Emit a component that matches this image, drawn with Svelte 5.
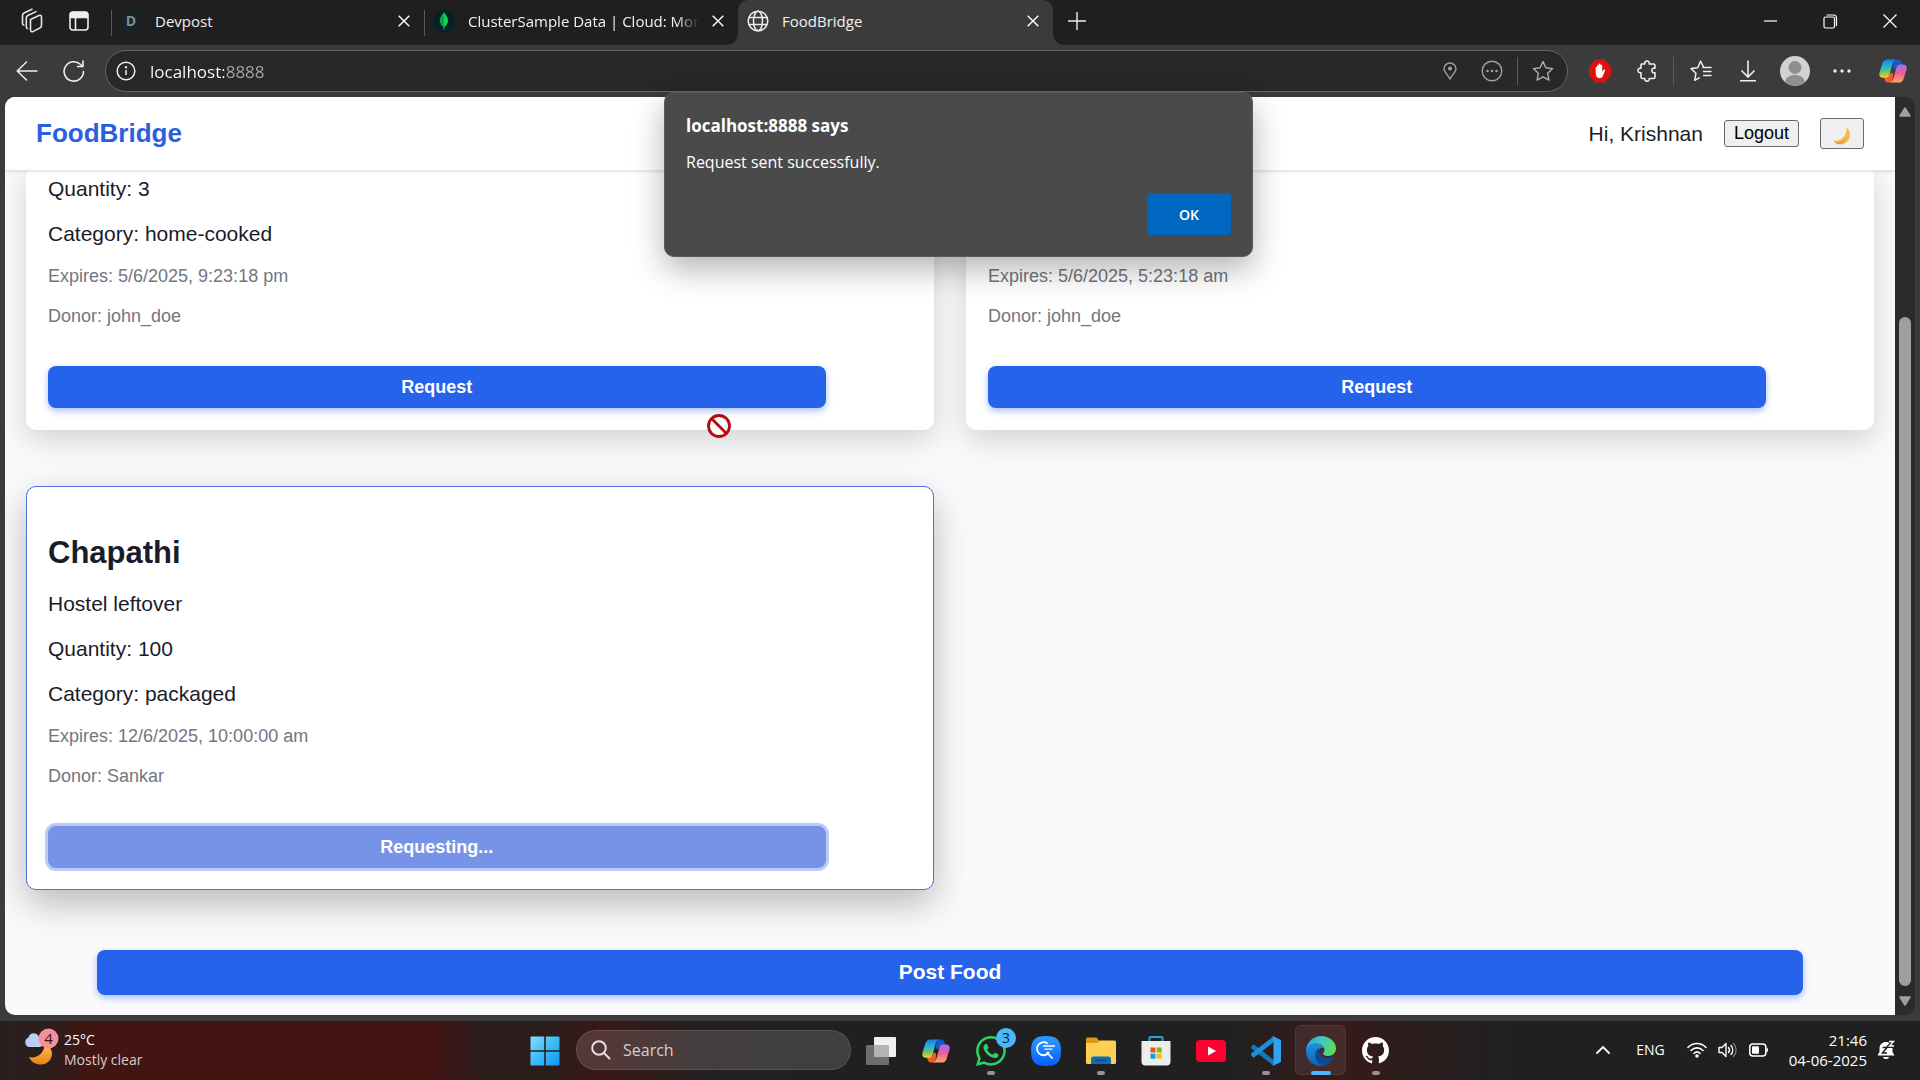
<script lang="ts">
  type Food = {
    title?: string;
    lines: string[];
    meta: string[];
    action: string;
    busy?: boolean;
    cut?: boolean;
  };

  const foods: Food[] = [
    {
      lines: ['Quantity: 3', 'Category: home-cooked'],
      meta: ['Expires: 5/6/2025, 9:23:18 pm', 'Donor: john_doe'],
      action: 'Request',
      cut: true,
    },
    {
      lines: [],
      meta: ['Expires: 5/6/2025, 5:23:18 am', 'Donor: john_doe'],
      action: 'Request',
      cut: true,
    },
    {
      title: 'Chapathi',
      lines: ['Hostel leftover', 'Quantity: 100', 'Category: packaged'],
      meta: ['Expires: 12/6/2025, 10:00:00 am', 'Donor: Sankar'],
      action: 'Requesting...',
      busy: true,
    },
  ];
</script>

{#snippet cross()}
  <svg width="12" height="12" viewBox="0 0 12 12" fill="none" stroke="#fff" stroke-width="1.4"><path d="M.7.7l10.6 10.6M11.3.7L.7 11.3" /></svg>
{/snippet}

{#snippet copilot()}
  <svg width="30" height="30" viewBox="0 0 24 24">
    <defs>
      <linearGradient id="cp-a" x1="0" y1="0" x2="0" y2="1">
        <stop offset="0" stop-color="#1b7de8" /><stop offset=".4" stop-color="#25b5d8" /><stop offset=".68" stop-color="#6cc66a" /><stop offset="1" stop-color="#f2d21c" />
      </linearGradient>
      <linearGradient id="cp-b" x1="0" y1="1" x2="0" y2="0">
        <stop offset="0" stop-color="#a56bee" /><stop offset=".5" stop-color="#ee5f9a" /><stop offset="1" stop-color="#ffa45c" />
      </linearGradient>
    </defs>
    <path fill="#1659c7" d="M12.500 2.800h3.600c1.500 0 2.300.9 2.700 2.400l.6 2c-3 .1-4.600.8-5.600 3.800l-2-1z" />
    <path fill="#f4582c" d="M11.500 21.200H7.900c-1.500 0-2.300-.9-2.700-2.400l-.6-2c3-.1 4.600-.8 5.600-3.800l2 1z" />
    <path fill="url(#cp-a)" d="M7.500 2.800H14.800C13 2.800 12.200 4.200 11.700 6L9.300 14.600C8.700 16.700 7.700 17.300 6 17.300H3.900C1.400 17.300.6 15.400 1.300 12.900L3.500 5.900C4.200 3.800 5.500 2.800 7.500 2.800z" />
    <path fill="url(#cp-b)" transform="rotate(180 12 12)" d="M7.500 2.800H14.800C13 2.800 12.200 4.200 11.700 6L9.300 14.600C8.700 16.700 7.700 17.300 6 17.300H3.900C1.400 17.300.6 15.400 1.300 12.900L3.500 5.900C4.200 3.800 5.500 2.800 7.500 2.800z" />
  </svg>
{/snippet}

<div class="desktop">
  <header class="tabs">
    <button class="slot" aria-label="Workspaces">
      <svg width="24" height="26" viewBox="0 0 24 26" fill="none" stroke="#e4e4e4" stroke-width="1.6" stroke-linejoin="round" stroke-linecap="round">
        <path d="M10.500 11.500l8.500-4c1.500-.6 2.500 0 2.500 1.500v8.500c0 1.200-.6 2-1.600 2.500l-6.700 3.400c-1.600.7-2.700.1-2.700-1.400z" />
        <path d="M7.500 20.500c-.9-.2-1.200-.8-1.200-1.700V10c0-1.200.5-2 1.500-2.500l8.200-3.900M3.800 17c-.9-.2-1.300-.8-1.300-1.700V7.500c0-1.200.5-2 1.500-2.500L12 1.300" />
      </svg>
    </button>
    <button class="slot" aria-label="Tab actions">
      <svg width="20" height="20" viewBox="0 0 20 20" fill="none" stroke="#eee" stroke-width="1.6"><rect x="1" y="1" width="18" height="18" rx="3" /><path d="M1.500 4.500V3.500a2 2 0 0 1 2-2h13a2 2 0 0 1 2 2v3h-17z" fill="#eee" /><path d="M6.500 6v13" /></svg>
    </button>
    <div class="tab first">
      <span class="fav dev">D</span>
      <a class="name" href="#devpost">Devpost</a>
      <button class="bare" aria-label="Close Devpost">{@render cross()}</button>
    </div>
    <div class="tab second">
      <span class="fav mongo"><svg width="10" height="18" viewBox="0 0 10 18"><path fill="#13d45e" d="M5 0c.5 2 4 4.500 4 8.500 0 3-1.800 5-3.500 6.300L5.300 18h-.6l-.2-3.200C2.800 13.500 1 11.500 1 8.500 1 4.500 4.500 2 5 0z" /><path fill="#09a348" d="M5 0v15l-.5-.2C2.800 13.500 1 11.500 1 8.500 1 4.500 4.500 2 5 0z" /></svg></span>
      <a class="name fade" href="#cluster">ClusterSample Data | Cloud: Mong</a>
      <button class="bare" aria-label="Close ClusterSample Data">{@render cross()}</button>
    </div>
    <div class="tab active">
      <span class="fav"><svg width="22" height="22" viewBox="0 0 22 22" fill="none" stroke="#eee" stroke-width="1.500"><circle cx="11" cy="11" r="9.800" /><ellipse cx="11" cy="11" rx="4.500" ry="9.800" /><path d="M2 7.500h18M2 14.500h18" /></svg></span>
      <a class="name" href="#foodbridge">FoodBridge</a>
      <button class="bare" aria-label="Close FoodBridge">{@render cross()}</button>
    </div>
    <button class="slot" aria-label="New tab"><svg width="18" height="18" viewBox="0 0 18 18" stroke="#eee" stroke-width="1.400"><path d="M9 0v18M0 9h18" /></svg></button>
    <div class="window">
      <button aria-label="Minimize"><svg width="13" height="13" viewBox="0 0 13 13" stroke="#fff" stroke-width="1.200"><path d="M0 6h13" /></svg></button>
      <button aria-label="Restore"><svg width="15" height="15" viewBox="0 0 15 15" fill="none" stroke="#fff" stroke-width="1.200"><rect x="1" y="3" width="10.500" height="11" rx="1.500" /><path d="M3.500 1h7a3 3 0 0 1 3 3v8" /></svg></button>
      <button aria-label="Close window"><svg width="14" height="14" viewBox="0 0 14 14" stroke="#fff" stroke-width="1.200"><path d="M.5.5l13 13M13.500.5l-13 13" /></svg></button>
    </div>
  </header>

  <nav class="toolbar" aria-label="Browser toolbar">
    <button class="slot" aria-label="Back"><svg width="22" height="20" viewBox="0 0 22 20" fill="none" stroke="#eee" stroke-width="1.500" stroke-linecap="round" stroke-linejoin="round"><path d="M21 10H1.200M10.500 1L1.200 10l9.300 9" /></svg></button>
    <button class="slot" aria-label="Reload"><svg width="22" height="22" viewBox="0 0 22 22" fill="none" stroke="#eee" stroke-width="1.600" stroke-linecap="round" stroke-linejoin="round"><path d="M20.500 11.500a9.700 9.700 0 1 1-2.900-7L20 6.500M20 1v5.500h-5.500" /></svg></button>
    <div class="address">
      <button class="bare" aria-label="Site information"><svg width="20" height="20" viewBox="0 0 20 20" fill="none" stroke="#eee" stroke-width="1.500"><circle cx="10" cy="10" r="8.800" /><path d="M10 9v5" /><circle cx="10" cy="6.300" r=".5" fill="#eee" /></svg></button>
      <input class="url" aria-label="Address" value="localhost:8888" />
      <button class="bare pin" aria-label="Location"><svg width="14" height="18" viewBox="0 0 14 18" fill="none" stroke="#a0a0a0" stroke-width="1.400"><path d="M7 17C5 13 1 10 1 6.800a6 5.800 0 0 1 12 0C13 10 9 13 7 17z" /><circle cx="7" cy="6.500" r="2" fill="#a0a0a0" stroke="none" /></svg></button>
      <button class="bare" aria-label="Site options"><svg width="22" height="22" viewBox="0 0 22 22" fill="none" stroke="#a0a0a0" stroke-width="1.400"><circle cx="11" cy="11" r="9.800" /><g fill="#a0a0a0" stroke="none"><circle cx="6.500" cy="11" r="1.300" /><circle cx="11" cy="11" r="1.300" /><circle cx="15.500" cy="11" r="1.300" /></g></svg></button>
      <i class="rule"></i>
      <button class="bare" aria-label="Favorite"><svg width="22" height="22" viewBox="0 0 22 22" fill="none" stroke="#b0b0b0" stroke-width="1.400" stroke-linejoin="round"><path d="M11 1.500l2.900 6.200 6.700.9-4.900 4.700 1.200 6.800-5.900-3.300-5.900 3.300 1.200-6.800L1.400 8.600l6.700-.9z" /></svg></button>
    </div>
    <div class="tools">
      <button class="slot" aria-label="Ad blocker"><svg width="22" height="24" viewBox="0 0 24 26"><path d="M7.500 1.500h9L23 8.500v9l-6.500 7h-9L1 17.500v-9z" fill="#dc1212" stroke="#dc1212" stroke-width="2" stroke-linejoin="round" /><path fill="#fff" d="M7.300 15V9.300c0-1.100 1.600-1.100 1.600 0V7.100c0-1.200 1.800-1.200 1.800 0V5.800c0-1.200 1.900-1.200 1.900 0v1.300c0-1.100 1.800-1.100 1.800 0v6.600l1.700-2c.8-.8 1.900-.2 1.500.8l-2.300 5.300c-.7 1.800-1.700 3-3.800 3-2.700 0-4.200-1.900-4.200-5.800z" /></svg></button>
      <button class="slot" aria-label="Extensions"><svg width="20" height="22" viewBox="0 0 20 22" fill="none" stroke="#eee" stroke-width="1.600" stroke-linejoin="round"><path d="M4.500 4h3.300c-1-4 5.400-4 4.400 0h4.300c1 0 1.500.5 1.500 1.500v2.700c-4.200-.8-4.200 5.400 0 4.600v4.200c0 1-.5 1.500-1.500 1.500h-4.300c.8 3.500-5.200 3.500-4.400 0H5.500c-1 0-1.500-.5-1.500-1.500v-4.200c-4 .6-4-5.200 0-4.600V4.500z" /></svg></button>
      <i class="rule"></i>
      <button class="slot" aria-label="Favorites list"><svg width="22" height="22" viewBox="0 0 22 22" fill="none" stroke="#eee" stroke-width="1.500" stroke-linejoin="round" stroke-linecap="round"><path d="M13.500 7L10.500 1.200 7.700 7.700l-6.500.9 4.700 4.700-1.200 7 4.500-2.500M13 7.500h8M13.500 11.500H21M13.500 15.500H21" /></svg></button>
      <button class="slot" aria-label="Downloads"><svg width="18" height="22" viewBox="0 0 18 22" fill="none" stroke="#eee" stroke-width="1.600"><path d="M9 .5v16M2.500 10.500L9 17l6.500-6.500M1 20.800h16" /></svg></button>
      <button class="slot" aria-label="Profile"><svg width="30" height="30" viewBox="0 0 30 30"><circle cx="15" cy="15" r="15" fill="#d2d2d2" /><circle cx="15" cy="11.500" r="6.500" fill="#8f8f8f" /><path fill="#8f8f8f" d="M5 26c1-5 5-7 10-7s9 2 10 7c-5.500 5.300-14.500 5.300-20 0z" /></svg></button>
      <button class="slot" aria-label="Settings and more"><svg width="18" height="6" viewBox="0 0 18 6" fill="#eee"><circle cx="2" cy="3" r="1.700" /><circle cx="9" cy="3" r="1.700" /><circle cx="16" cy="3" r="1.700" /></svg></button>
      <button class="slot assistant" aria-label="Copilot">{@render copilot()}</button>
    </div>
  </nav>

  <div class="frame">
    <div class="page">
      <header class="site">
        <h1>FoodBridge</h1>
        <span class="hello">Hi, Krishnan</span>
        <button class="plain">Logout</button>
        <button class="plain theme" aria-label="Toggle dark mode">
          <svg width="20" height="20" viewBox="0 0 20 20"><path fill="#f9b851" d="M14.300 1.200c3 2.400 4.300 6.300 3.200 10.200-1.400 5-6.200 7.700-10.600 6.900-2.600-.5-4.500-2-5.700-4.300 3 1.300 6.700.8 9.200-1.700 3.200-2.900 4.500-7 3.900-11.100z" /><path fill="#e79a38" d="M2.500 15.500c4.500 1.500 9-.2 11.500-3.500-1 4-4.500 6.500-7.700 6.100-1.600-.4-2.900-1.300-3.800-2.600z" /></svg>
        </button>
      </header>
      <main>
        <div class="grid">
          {#each foods as food}
            <article class="card" class:cut={food.cut} class:busy={food.busy}>
              {#if food.title}<h2>{food.title}</h2>{/if}
              {#each food.lines as line}<p>{line}</p>{/each}
              {#each food.meta as line}<p class="meta">{line}</p>{/each}
              <button class="request" disabled={food.busy}>{food.action}</button>
            </article>
          {/each}
        </div>
        <button class="post">Post Food</button>
      </main>
    </div>
    <div class="scroll" aria-hidden="true">
      <svg width="12" height="10" viewBox="0 0 12 10"><path fill="#a0a0a0" stroke="#a0a0a0" stroke-width="1.500" stroke-linejoin="round" d="M6 1l5 8H1z" /></svg>
      <i class="above"></i>
      <i class="thumb"></i>
      <svg width="12" height="10" viewBox="0 0 12 10"><path fill="#a0a0a0" stroke="#a0a0a0" stroke-width="1.500" stroke-linejoin="round" d="M6 9l5-8H1z" /></svg>
    </div>
  </div>

  <footer class="taskbar">
    <button class="weather" aria-label="Weather">
      <svg width="36" height="44" viewBox="0 0 36 44">
        <defs><linearGradient id="mo" x1="0" y1="0" x2="0" y2="1"><stop offset="0" stop-color="#fbc14b" /><stop offset="1" stop-color="#e98116" /></linearGradient></defs>
        <path fill="url(#mo)" d="M21 16c7 3 9 10 5 16-5 7-17 6-21-3 7 2 15-3 16-13z" />
        <path fill="#b9cdf5" d="M5 19a5 5 0 0 1-.5-9.500C5.500 4 13 4 14.500 8.500 18 8 20 11 19.500 14s-2 5-4.500 5z" />
        <circle cx="24.500" cy="10.500" r="10" fill="#f78f98" />
        <text x="24.500" y="16" text-anchor="middle" font-size="15" fill="#3a1414">4</text>
      </svg>
      <span><b>25°C</b><em>Mostly clear</em></span>
    </button>

    <div class="apps">
      <button class="app" aria-label="Start"><svg width="30" height="30" viewBox="0 0 30 30"><defs><linearGradient id="win" x1="0" y1="0" x2="1" y2="1"><stop offset="0" stop-color="#86dcff" /><stop offset=".5" stop-color="#3cbcf8" /><stop offset="1" stop-color="#0f98f5" /></linearGradient></defs><path fill="url(#win)" d="M1.500.5h12.700v13.700H.5V1.500a1 1 0 0 1 1-1zM15.800.5h12.700a1 1 0 0 1 1 1v12.700H15.800zM.5 15.800h13.700v13.700H1.500a1 1 0 0 1-1-1zM15.800 15.800h13.700v12.700a1 1 0 0 1-1 1H15.800z" /></svg></button>
      <label class="search">
        <svg width="20" height="20" viewBox="0 0 20 20" fill="none" stroke="#e8e0e0" stroke-width="2" stroke-linecap="round"><circle cx="8" cy="8" r="6.800" /><path d="M13 13l5.500 5.500" /></svg>
        <input aria-label="Search" placeholder="Search" />
      </label>
      <button class="app" aria-label="Task view"><svg width="30" height="30" viewBox="0 0 30 30"><rect x="8" y="1" width="22" height="20" rx="1" fill="#f0f0f0" /><rect x="0" y="9" width="23" height="20" rx="1" fill="#6d6d6d" /><rect x="8" y="9" width="15" height="12" fill="#b4b4b4" /></svg></button>
      <button class="app" aria-label="Copilot app">{@render copilot()}</button>
      <button class="app open" aria-label="WhatsApp">
        <svg width="30" height="30" viewBox="0 0 16 16" fill="#2bd366"><path d="M13.601 2.326A7.850 7.850 0 0 0 7.994 0C3.627 0 .068 3.558.064 7.926c0 1.399.366 2.760 1.057 3.965L0 16l4.204-1.102a7.900 7.900 0 0 0 3.790.965h.004c4.368 0 7.926-3.558 7.930-7.930A7.900 7.900 0 0 0 13.600 2.326zM7.994 14.521a6.600 6.600 0 0 1-3.356-.92l-.24-.144-2.494.654.666-2.433-.156-.251a6.560 6.560 0 0 1-1.007-3.505c0-3.626 2.957-6.584 6.591-6.584a6.560 6.560 0 0 1 4.660 1.931 6.560 6.560 0 0 1 1.928 4.660c-.004 3.639-2.961 6.592-6.592 6.592m3.615-4.934c-.197-.099-1.170-.578-1.353-.646-.182-.065-.315-.099-.445.099-.133.197-.513.646-.627.775-.114.133-.232.148-.43.05-.197-.1-.836-.308-1.592-.985-.59-.525-.985-1.175-1.103-1.372-.114-.198-.011-.304.088-.403.087-.088.197-.232.296-.346.1-.114.133-.198.198-.33.065-.134.034-.248-.015-.347-.05-.099-.445-1.076-.612-1.470-.16-.389-.323-.335-.445-.34-.114-.007-.247-.007-.38-.007a.73.73 0 0 0-.529.247c-.182.198-.691.677-.691 1.654s.71 1.916.81 2.049c.098.133 1.394 2.132 3.383 2.992.47.205.84.326 1.129.418.475.152.904.129 1.246.08.38-.058 1.171-.48 1.338-.943.164-.464.164-.86.114-.943-.049-.084-.182-.133-.38-.232" /></svg>
        <span class="badge">3</span>
      </button>
      <button class="app" aria-label="Quick search"><svg width="30" height="30" viewBox="0 0 30 30"><defs><linearGradient id="qs" x1="0" y1="0" x2="0" y2="1"><stop offset="0" stop-color="#2f9cff" /><stop offset="1" stop-color="#0a5cff" /></linearGradient></defs><path fill="url(#qs)" d="M15 0c11 0 15 4 15 15s-4 15-15 15S0 26 0 15 4 0 15 0z" /><g fill="none" stroke="#fff" stroke-width="1.800" stroke-linecap="round"><path d="M16 7.200A6.500 6.500 0 1 0 17 17.500M16.500 17l4.500 5" /><path d="M12.500 10h11M14 13.200h7M16 16.300h2" stroke-width="1.300" /></g></svg></button>
      <button class="app open" aria-label="File Explorer"><svg width="30" height="28" viewBox="0 0 30 28"><path fill="#d79a10" d="M0 2a1.500 1.500 0 0 1 1.500-1.500h9L13.500 4H28v6H0z" /><path fill="#fcd053" d="M0 6h11l3-2.500h14.500A1.500 1.500 0 0 1 30 5v20.500a1.500 1.500 0 0 1-1.500 1.500h-27A1.500 1.500 0 0 1 0 25.500z" /><path fill="#0f6cb6" d="M5 27v-5a2.500 2.500 0 0 1 2.500-2.500h15A2.500 2.500 0 0 1 25 22v5z" /><path stroke="#0a4a86" stroke-width="1.500" d="M9 23.500h12" /></svg></button>
      <button class="app" aria-label="Microsoft Store"><svg width="30" height="30" viewBox="0 0 30 30"><path fill="none" stroke="#27a5e0" stroke-width="2" d="M8.500 7V2a1 1 0 0 1 1-1h11a1 1 0 0 1 1 1v5" /><path fill="#ececec" d="M.5 5h29v20.500a4 4 0 0 1-4 4h-21a4 4 0 0 1-4-4z" /><path fill="#f25022" d="M9.500 11.500h5v5h-5z" /><path fill="#7fba00" d="M15.700 11.500h5v5h-5z" /><path fill="#00a4ef" d="M9.500 17.700h5v5h-5z" /><path fill="#ffb900" d="M15.700 17.700h5v5h-5z" /></svg></button>
      <button class="app" aria-label="YouTube"><svg width="30" height="22" viewBox="0 0 30 22"><rect width="30" height="22" rx="4" fill="#ff0033" /><path fill="#fff" d="M12 6.500l8 4.500-8 4.500z" /></svg></button>
      <button class="app open" aria-label="Visual Studio Code"><svg width="30" height="30" viewBox="0 0 30 30"><path fill="#1278bd" d="M0 11l2-2.200c.4-.4.900-.4 1.400 0L23 24v6L.2 12.600C-.2 12.100-.3 11.500 0 11z" /><path fill="#1b8fd8" d="M0 19l2 2.200c.4.4.9.400 1.400 0L23 6V0L.2 17.400c-.4.500-.5 1.100-.2 1.600z" /><path fill="#30a3ee" d="M22 .2l7 3.300c.7.300 1 .8 1 1.500v20c0 .7-.3 1.200-1 1.500l-7 3.300c-.8.300-1.400.1-2-.5 1 .9 2.500.2 2.500-1.200V1.900c0-1.400-1.500-2.100-2.500-1.200.6-.6 1.200-.8 2-.5z" /></svg></button>
      <button class="app open current" aria-label="Microsoft Edge">
        <svg width="30" height="30" viewBox="0 0 30 30">
          <defs>
            <linearGradient id="ed-a" x1="0" y1=".4" x2="1" y2=".5"><stop offset="0" stop-color="#2aa6dc" /><stop offset=".5" stop-color="#3cc8bd" /><stop offset="1" stop-color="#62de4e" /></linearGradient>
            <linearGradient id="ed-b" x1="0" y1="0" x2="0" y2="1"><stop offset="0" stop-color="#1c91e0" /><stop offset="1" stop-color="#1160b8" /></linearGradient>
          </defs>
          <path fill="url(#ed-b)" d="M0 15C0 10 4 7.500 9.500 7.500c5 0 9 3 9 6.500 0-1.500-2-2.500-3.500-2-1.500.6-2.500 2.300-2.500 4.500 0 5 6 8.500 14.500 4.500-2.500 6-7 9-12.500 9C6.500 30 0 23.500 0 15z" />
          <path fill="#0d4a96" d="M13 12C8 14.500 8 22.500 12 26.500c2 2 5 3.300 8 2.700 3.500-1.500 6-4 7.500-7.200.3-.9-.4-1.100-1-.7-6.500 3-14-.3-13.500-9.300z" />
          <path fill="url(#ed-a)" d="M0 14.500C.5 6.500 7 0 15 0c8.500 0 15 6 15 12.500 0 4.500-3.500 7.500-8 7.500-3 0-5-1-5-2.200s1.500-1.800 1.500-4c0-3.500-4-6.300-9-6.300S.5 10.500 0 14.500z" />
        </svg>
      </button>
      <button class="app open" aria-label="GitHub Desktop"><svg width="27" height="27" viewBox="0 0 16 16" fill="#fff"><path d="M8 0C3.580 0 0 3.580 0 8c0 3.540 2.290 6.530 5.470 7.590.4.07.55-.17.55-.38 0-.19-.01-.82-.01-1.490-2.010.37-2.530-.49-2.690-.94-.09-.23-.48-.94-.82-1.130-.28-.15-.68-.52-.01-.53.63-.01 1.080.58 1.230.82.72 1.210 1.870.87 2.330.66.07-.52.28-.87.51-1.070-1.780-.2-3.640-.89-3.640-3.950 0-.87.31-1.590.82-2.150-.08-.2-.36-1.020.08-2.120 0 0 .67-.21 2.200.82.64-.18 1.320-.27 2-.27s1.360.09 2 .27c1.530-1.040 2.200-.82 2.200-.82.44 1.100.16 1.920.08 2.120.51.56.82 1.270.82 2.150 0 3.070-1.870 3.750-3.650 3.950.29.25.54.73.54 1.480 0 1.070-.01 1.930-.01 2.200 0 .21.15.46.55.38A8.010 8.010 0 0 0 16 8c0-4.420-3.580-8-8-8z" /></svg></button>
    </div>

    <div class="tray">
      <button class="bare" aria-label="Hidden icons"><svg width="14" height="9" viewBox="0 0 14 9" fill="none" stroke="#fff" stroke-width="1.800" stroke-linecap="round"><path d="M1 8l6-6 6 6" /></svg></button>
      <button class="bare lang">ENG</button>
      <button class="bare status" aria-label="Network, volume and battery">
        <svg width="20" height="16" viewBox="0 0 20 16" fill="none" stroke="#fff" stroke-width="1.600" stroke-linecap="round"><path d="M1 5.500c5-5.300 13-5.300 18 0M4 8.500c3.500-3.500 8.500-3.500 12 0M7 11.300c1.800-1.700 4.200-1.700 6 0" /><circle cx="10" cy="14" r="1" fill="#fff" /></svg>
        <svg width="20" height="16" viewBox="0 0 20 16" fill="none" stroke="#fff" stroke-width="1.400" stroke-linecap="round" stroke-linejoin="round"><path d="M1 5.500h3L8 1.500v13l-4-4H1zM10.500 5.500c1.300 1.500 1.300 3.500 0 5M13 3.500c2.300 2.600 2.300 6.400 0 9" /><path d="M15.500 1.500c3.500 3.700 3.500 9.300 0 13" stroke="#777" /></svg>
        <svg width="20" height="14" viewBox="0 0 20 14"><rect x=".8" y="1" width="16" height="12" rx="3" fill="none" stroke="#fff" stroke-width="1.500" /><rect x="3" y="3.200" width="7" height="7.600" rx="1" fill="#fff" /><path fill="#fff" d="M17.500 4.500c2 .3 2 4.700 0 5z" /></svg>
      </button>
      <button class="bare clock"><span>21:46</span><span>04-06-2025</span></button>
      <button class="bare" aria-label="Notifications"><svg width="18" height="20" viewBox="0 0 18 20"><path fill="#fff" d="M2.500 8.500C2.500 4.500 5.500 2 9 2s6.500 2.500 6.500 6.500V12l2 3.500H.5l2-3.500zM6 17h6c-.5 2.700-5.500 2.700-6 0z" /><path fill="none" stroke="#1f1f1f" stroke-width="1.500" d="M5.500 7.500h4.500L5.500 13H10" /><path fill="none" stroke="#1f1f1f" stroke-width="4" d="M12 1.500h4.500L12.500 6H17" /><path fill="none" stroke="#fff" stroke-width="1.400" d="M12 1.500h4.500L12.500 6H17" /></svg></button>
    </div>
  </footer>

  <div class="alert" role="alertdialog" aria-labelledby="alert-title" aria-describedby="alert-text">
    <h2 id="alert-title">localhost:8888 says</h2>
    <p id="alert-text">Request sent successfully.</p>
    <button>OK</button>
  </div>

  <svg class="cursor" width="24" height="24" viewBox="0 0 24 24" fill="none" stroke="#b80a0f" stroke-width="2.800" aria-hidden="true"><circle cx="12" cy="12" r="10.500" fill="#fff" /><path d="M4.800 4.800l14.400 14.400" /></svg>
</div>

<style>
  :global(body) { margin: 0; background: #202020; }
  .desktop {
    position: relative;
    display: flex;
    flex-direction: column;
    height: 100vh;
    overflow: hidden;
    background: #3b3b3b;
    color: #fff;
    font-family: "Open Sans", "Noto Sans", sans-serif;
    font-size: 15px;
  }
  button, input { font: inherit; color: inherit; }
  svg { display: block; flex: none; }
  .slot, .bare, .app, .window button, .weather {
    display: flex;
    align-items: center;
    justify-content: center;
    padding: 0;
    border: 0;
    background: none;
  }
  .slot { width: 47px; flex: none; }
  .rule { width: 1px; height: 28px; background: #5c5c5c; }

  .tabs { display: flex; align-items: stretch; flex: none; height: 45px; padding-left: 8px; background: #1f1f1f; }
  .tabs > .slot, .window { padding-bottom: 3px; }
  .tab { display: flex; align-items: center; gap: 13px; box-sizing: border-box; padding: 0 14px 4px 9px; flex: none; }
  .tab .name { flex: 1; overflow: hidden; white-space: nowrap; color: #f2f2f2; text-decoration: none; }
  .fav { display: flex; align-items: center; justify-content: center; width: 22px; height: 22px; border-radius: 50%; flex: none; }
  .dev { background: #152429; color: #7d8d94; font-size: 14px; font-weight: 700; }
  .mongo { background: #04202b; }
  .first, .second { background: linear-gradient(#5a5a5a, #5a5a5a) no-repeat 0 10px / 1px 26px; }
  .first { width: 313px; margin-left: 9px; }
  .second { width: 314px; }
  .fade { mask-image: linear-gradient(90deg, #000 90%, transparent); }
  .active { position: relative; width: 315px; background: #3b3b3b; border-radius: 10px 10px 0 0; }
  .active::before, .active::after { content: ""; position: absolute; bottom: 0; width: 10px; height: 10px; }
  .active::before { right: 100%; background: radial-gradient(circle at 0 0, transparent 9px, #3b3b3b 10px); }
  .active::after { left: 100%; background: radial-gradient(circle at 100% 0, transparent 9px, #3b3b3b 10px); }
  .window { display: flex; margin-left: auto; }
  .window button { width: 60px; }

  .toolbar { display: flex; align-items: center; flex: none; height: 52px; padding-left: 3px; background: #3b3b3b; }
  .address {
    display: flex;
    align-items: center;
    flex: 1;
    gap: 14px;
    box-sizing: border-box;
    height: 42px;
    margin-left: 8px;
    padding: 0 13px 0 10px;
    border: 1px solid #656565;
    border-radius: 21px;
    background: #282828;
  }
  .url {
    flex: 1;
    min-width: 0;
    padding: 0;
    border: 0;
    outline: 0;
    font-size: 17px;
    color: transparent;
    background: linear-gradient(90deg, #fff 74px, #a8a8a8 74px);
    background-clip: text;
    -webkit-background-clip: text;
  }
  .pin { margin-right: 10px; }
  .tools { display: flex; align-items: center; padding: 0 4px 0 8px; }
  .tools .rule { margin: 0 3px; }
  .assistant { margin-left: 4px; }

  .frame { display: flex; flex: 1; min-height: 0; padding: 0 5px 6px; }
  .page {
    display: flex;
    flex-direction: column;
    flex: 1;
    overflow: hidden;
    border-radius: 10px 0 0 10px;
    background: #fafafc;
    color: #1a1c29;
    font-family: "Liberation Sans", Arial, sans-serif;
    font-size: 21px;
  }
  .site {
    z-index: 1;
    display: flex;
    align-items: center;
    gap: 21px;
    flex: none;
    height: 73px;
    padding: 0 31px;
    background: #fff;
    box-shadow: 0 1px 4px rgba(0, 0, 0, 0.16);
  }
  h1 { flex: 1; margin: 0; color: #2a60e0; font-size: 26px; }
  .plain { height: 27px; padding: 0 9px; border: 1px solid #6b6b6b; border-radius: 3px; background: #efefef; color: #000; font-size: 18px; line-height: 25px; }
  .theme { display: flex; align-items: center; justify-content: center; width: 44px; height: 31px; padding: 4px 0 0; }

  main { display: flex; flex-direction: column; justify-content: flex-end; flex: 1; min-height: 0; padding: 0 21px 20px; }
  .grid { display: grid; grid-template-columns: 1fr 1fr; gap: 56px 32px; flex: none; }
  .card {
    display: flex;
    flex-direction: column;
    justify-content: flex-end;
    padding: 48px 21px 21px;
    border: 1px solid transparent;
    border-radius: 10px;
    background: #fff;
    box-shadow: 0 10px 30px rgba(0, 0, 0, 0.16);
  }
  .cut { padding-top: 0; border-top: 0; }
  .busy { border-color: #4a74d8; box-shadow: 0 14px 36px rgba(0, 0, 0, 0.26); }
  .card h2 { margin: 0 0 10px; font-size: 31px; line-height: 36px; }
  .card p { margin: 0; line-height: 45px; }
  .card .meta { color: #73757f; font-size: 18px; line-height: 40px; }
  .request, .post {
    padding: 0;
    border: 0;
    border-radius: 8px;
    background: #2563eb;
    box-shadow: 0 3px 7px rgba(37, 99, 235, 0.4);
    color: #fff;
    font-weight: 700;
  }
  .request { width: 90%; height: 42px; margin-top: 30px; font-size: 18px; }
  .request:disabled { background: #7693e8; box-shadow: 0 0 0 3px #bccbf5; }
  .post { flex: none; height: 45px; margin: 60px 71px 0; padding-bottom: 2px; }

  .scroll {
    display: flex;
    flex-direction: column;
    align-items: center;
    box-sizing: border-box;
    width: 20px;
    padding: 10px 0 9px;
    border-radius: 0 10px 10px 0;
    background: #2b2b2b;
  }
  .above { flex: 23; }
  .thumb { flex: 77; width: 12px; margin-bottom: 10px; border-radius: 6px; background: #9f9f9f; }

  .taskbar {
    display: grid;
    grid-template-columns: 1fr auto 1fr;
    align-items: center;
    flex: none;
    height: 59px;
    background: linear-gradient(90deg, #2a1f1f 0, #2c1e1d 50px, #421513 90px, #421513 430px, #2b1d1c 480px, #2c1d1c 550px, #3a1817 600px, #251f1f 700px, #202020 820px, #202020 1230px, #381a1a 1330px, #2a1d1d 1420px, #202020 1520px);
  }
  .weather { justify-self: start; gap: 4px; padding: 0 0 2px 24px; font-size: 14px; text-align: left; }
  .weather b, .weather em { display: block; font-style: normal; font-weight: 400; line-height: 20px; }
  .weather em { color: #d9cccc; }
  .apps { display: flex; align-items: center; }
  .app { position: relative; width: 55px; height: 59px; }
  .open::after { content: ""; position: absolute; bottom: 5px; width: 8px; height: 4px; border-radius: 2px; background: #9a9292; }
  .current::after { width: 20px; background: #4cb8fb; }
  .current::before { content: ""; position: absolute; inset: 4px 2px 5px; border: 1px solid #ffffff12; border-radius: 6px; background: #ffffff12; }
  .current svg { z-index: 1; }
  .badge { position: absolute; top: 7px; right: 2px; width: 20px; height: 20px; border-radius: 50%; background: #4cb8fb; color: #0d2233; font-size: 14px; line-height: 20px; }
  .search {
    display: flex;
    align-items: center;
    gap: 12px;
    box-sizing: border-box;
    width: 275px;
    height: 40px;
    margin: 0 2px 1px 4px;
    padding: 0 14px;
    border: 1px solid #ffffff1c;
    border-radius: 20px;
    background: #ffffff24;
  }
  .search input { flex: 1; min-width: 0; padding: 0; border: 0; outline: 0; background: none; font-size: 16px; }
  .search input::placeholder { color: #d6cfcf; opacity: 1; }
  .tray { display: flex; align-items: center; justify-self: end; padding: 0 25px 2px 0; font-size: 14px; }
  .lang { margin: 0 22px 0 26px; }
  .status { gap: 11px; }
  .clock { flex-direction: column; align-items: flex-end; margin: 0 10px 0 20px; font-size: 15px; line-height: 20px; }

  .alert {
    position: absolute;
    z-index: 2;
    top: 92px;
    left: 50%;
    display: flex;
    flex-direction: column;
    box-sizing: border-box;
    width: 589px;
    margin-left: -296px;
    padding: 21px;
    border: 1px solid #5a5a5a;
    border-radius: 10px;
    background: #4a4a4a;
    box-shadow: 0 12px 32px rgba(0, 0, 0, 0.3);
  }
  .alert h2 { margin: 0 0 12px; font-size: 17px; font-weight: 700; line-height: 24px; }
  .alert p { margin: 0 0 19px; font-size: 16px; line-height: 24px; }
  .alert button { align-self: flex-end; width: 84px; height: 42px; padding: 0; border: 0; border-radius: 4px; background: #0067c0; font-size: 14px; font-weight: 600; }
  .cursor { position: absolute; z-index: 3; top: 414px; left: 707px; }
</style>
